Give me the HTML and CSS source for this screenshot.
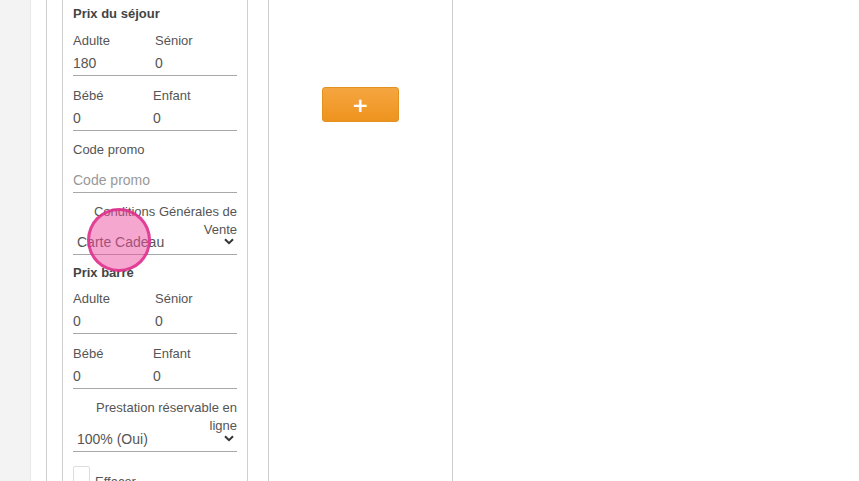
FILE: index.html
```html
<!DOCTYPE html>
<html lang="fr">
<head>
    <meta charset="UTF-8">
    <meta name="viewport" content="width=device-width, initial-scale=1.0">
    <title>Prestation</title>
    <link rel="stylesheet" href="styles.css">
</head>
<body>
    <div class="page">
        <div class="panel">
            <div class="card">
                <h4 class="title">Prix du séjour</h4>
                <div class="row">
                    <div class="field">
                        <label>Adulte</label>
                        <input type="text" value="180">
                    </div>
                    <div class="field">
                        <label>Sénior</label>
                        <input type="text" value="0">
                    </div>
                </div>
                <div class="row alt">
                    <div class="field">
                        <label>Bébé</label>
                        <input type="text" value="0">
                    </div>
                    <div class="field">
                        <label>Enfant</label>
                        <input type="text" value="0">
                    </div>
                </div>

                <div class="field promo">
                    <label>Code promo</label>
                    <input type="text" placeholder="Code promo">
                </div>

                <div class="choice">
                    <label>Conditions Générales de Vente</label>
                    <div class="select-wrap">
                        <select>
                            <option>Carte Cadeau</option>
                        </select>
                        <svg class="chevron" width="10" height="7" viewBox="0 0 10 7"><path d="M1 1.2l4 4 4-4" fill="none" stroke="#333" stroke-width="2"/></svg>
                    </div>
                </div>

                <h4 class="title second">Prix barré</h4>
                <div class="row">
                    <div class="field">
                        <label>Adulte</label>
                        <input type="text" value="0">
                    </div>
                    <div class="field">
                        <label>Sénior</label>
                        <input type="text" value="0">
                    </div>
                </div>
                <div class="row alt last">
                    <div class="field">
                        <label>Bébé</label>
                        <input type="text" value="0">
                    </div>
                    <div class="field">
                        <label>Enfant</label>
                        <input type="text" value="0">
                    </div>
                </div>

                <div class="choice online">
                    <label>Prestation réservable en ligne</label>
                    <div class="select-wrap">
                        <select>
                            <option>100% (Oui)</option>
                        </select>
                        <svg class="chevron" width="10" height="7" viewBox="0 0 10 7"><path d="M1 1.2l4 4 4-4" fill="none" stroke="#333" stroke-width="2"/></svg>
                    </div>
                </div>

                <div class="check">
                    <span class="box"></span>
                    <span>Effacer</span>
                </div>
            </div>

            <div class="column">
                <button class="add">+</button>
            </div>
        </div>
    </div>

    <div class="click"></div>
</body>
</html>
```

FILE: styles.css
```css
body {
    font-family: "Liberation Sans", Arial, sans-serif;
    background-color: #f3f3f3;
    margin: 0;
    height: 481px;
    overflow: hidden;
    color: #555;
}

.page {
    margin-left: 30px;
    height: 100%;
    background-color: #fff;
    border-left: 1px solid #e8e8e8;
    padding-left: 15px;
}

.panel {
    display: flex;
    align-items: flex-start;
    height: 100%;
    border-left: 1px solid #cfcfcf;
    padding-left: 15px;
}

.card {
    box-sizing: border-box;
    width: 186px;
    height: 100%;
    padding: 6px 10px 0;
    border-left: 1px solid #cfcfcf;
    border-right: 1px solid #cfcfcf;
}

.title {
    margin: 0 0 11px;
    font-size: 13px;
    line-height: 16px;
    font-weight: bold;
    color: #444;
}

.title.second {
    margin-bottom: 10px;
}

.row {
    display: grid;
    grid-template-columns: 82px 1fr;
    margin-bottom: 12px;
}

.row.alt {
    grid-template-columns: 80px 1fr;
    margin-bottom: 11px;
}

.row.alt.last {
    margin-bottom: 10px;
}

.field label {
    display: block;
    font-size: 13px;
    line-height: 16px;
}

input {
    box-sizing: border-box;
    display: block;
    width: 100%;
    height: 27px;
    padding: 1px 0 0;
    border: none;
    border-bottom: 1px solid #a8a8a8;
    background: transparent;
    font-family: inherit;
    font-size: 14px;
    color: #555;
    outline: none;
}

input::placeholder {
    color: #999;
}

.promo {
    margin-bottom: 10px;
}

.promo label {
    margin-bottom: 8px;
}

.choice {
    margin-bottom: 10px;
}

.choice label {
    display: block;
    text-align: right;
    font-size: 13px;
    line-height: 18px;
}

.select-wrap {
    position: relative;
    margin-top: -11px;
}

.online .select-wrap {
    margin-top: -10px;
}

select {
    box-sizing: border-box;
    display: block;
    width: 100%;
    height: 27px;
    padding: 1px 0 0 4px;
    border: none;
    border-bottom: 1px solid #a8a8a8;
    background: transparent;
    appearance: none;
    font-family: inherit;
    font-size: 14px;
    color: #555;
    outline: none;
}

.chevron {
    position: absolute;
    right: 3px;
    top: 10px;
}

.check {
    display: flex;
    align-items: flex-start;
    gap: 5px;
    margin-top: 14px;
    font-size: 13px;
}

.box {
    box-sizing: border-box;
    width: 17px;
    height: 17px;
    border: 1px solid #ddd;
    border-radius: 2px;
    flex: none;
}

.check span + span {
    margin-top: 8px;
}

.column {
    box-sizing: border-box;
    width: 185px;
    height: 100%;
    margin-left: 20px;
    border-left: 1px solid #cfcfcf;
    border-right: 1px solid #cfcfcf;
    display: flex;
    justify-content: center;
    align-items: flex-start;
}

.add {
    margin-top: 87px;
    width: 77px;
    height: 35px;
    border: 1px solid #e4901f;
    border-radius: 3px;
    background: linear-gradient(#f5a640, #ee931e);
    color: #fff;
    font-family: "DejaVu Sans", sans-serif;
    font-size: 20px;
    font-weight: bold;
    line-height: 1;
    padding: 0;
}

.click {
    position: absolute;
    left: 87px;
    top: 208px;
    width: 64px;
    height: 64px;
    box-sizing: border-box;
    border-radius: 50%;
    border: 3px solid rgba(222, 45, 140, 0.85);
    background-color: rgba(238, 80, 160, 0.5);
}
```
